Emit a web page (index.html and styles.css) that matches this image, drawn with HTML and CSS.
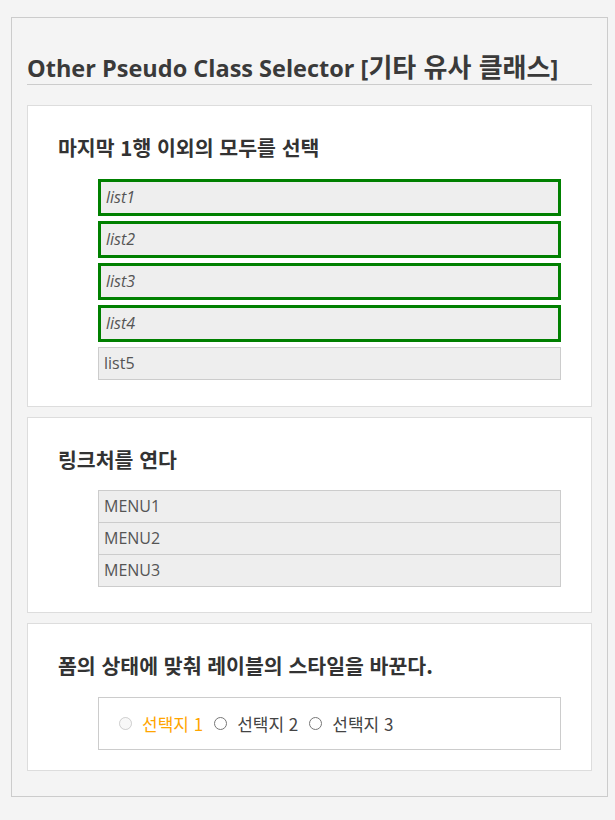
FILE: index.html
```html
<!DOCTYPE html>
<html lang="ko">
<head>
<meta charset="utf-8">
<title>Other Pseudo Class Selector</title>
<link rel="stylesheet" href="styles.css">
</head>
<body>
<div class="wrap">
  <h2 class="title">Other Pseudo Class Selector [<span class="ko">기타 유사 클래스</span>]</h2>

  <section class="card">
    <h3 class="card-title">마지막 1행 이외의 모두를 선택</h3>
    <ul class="list">
      <li>list1</li>
      <li>list2</li>
      <li>list3</li>
      <li>list4</li>
      <li>list5</li>
    </ul>
  </section>

  <section class="card">
    <h3 class="card-title card-title--tight">링크처를 연다</h3>
    <ul class="menu">
      <li><a href="#">MENU1</a></li>
      <li><a href="#">MENU2</a></li>
      <li><a href="#">MENU3</a></li>
    </ul>
  </section>

  <section class="card card--last">
    <h3 class="card-title">폼의 상태에 맞춰 레이블의 스타일을 바꾼다.</h3>
    <div class="choices">
      <input type="radio" id="c1" name="c" disabled><label for="c1">선택지 1</label>
      <input type="radio" id="c2" name="c"><label for="c2">선택지 2</label>
      <input type="radio" id="c3" name="c"><label for="c3">선택지 3</label>
    </div>
  </section>
</div>
</body>
</html>
```
FILE: styles.css
```css
* { box-sizing: border-box; }

html, body {
  margin: 0;
  padding: 0;
  background: #f4f4f4;
}

body {
  font-family: "Open Sans", "Noto Sans CJK KR", sans-serif;
  color: #555;
  font-size: 16px;
}

.wrap {
  margin: 17px 0 0 11px;
  width: 597px;
  border: 1px solid #cccccc;
  background: #f4f4f4;
  padding: 35px 15px 15px;
}

.title {
  margin: 0 0 20px;
  padding: 0 0 1px;
  height: 32px;
  font-size: 23.5px;
  line-height: 30px;
  font-weight: bold;
  color: #3a3a3a;
  border-bottom: 1px solid #cccccc;
  white-space: nowrap;
}

.title .ko {
  font-family: "Noto Sans CJK KR", sans-serif;
  font-size: 26px;
  line-height: 20px;
}

.card {
  background: #fff;
  border: 1px solid #dddddd;
  padding: 30px 30px 20px;
  margin-bottom: 10px;
}

.card-title {
  margin: 0 0 21px;
  font-family: "Noto Sans CJK KR", sans-serif;
  font-size: 20.5px;
  line-height: 22px;
  font-weight: bold;
  color: #333;
}

.card-title--tight { margin-bottom: 20px; }

.list, .menu {
  list-style: none;
  margin: 0 0 6px 40px;
  padding: 0;
}

.list li {
  background: #eeeeee;
  border: 1px solid #cccccc;
  padding: 5px;
  line-height: 21px;
  margin-bottom: 5px;
}

.list li:not(:last-child) {
  border: 3px solid green;
  font-style: italic;
}

.menu { margin-bottom: 5px; }

.menu li {
  background: #eeeeee;
  border: 1px solid #cccccc;
  margin-top: -1px;
  line-height: 31px;
  padding: 0 5px;
}

.menu li:first-child { margin-top: 0; }

.menu a {
  color: #555;
  text-decoration: none;
}

.choices {
  margin-left: 40px;
  border: 1px solid #cccccc;
  height: 53px;
  padding: 0 0 0 20px;
  display: flex;
  align-items: center;
}

.choices input {
  margin: 0 10px 0 0;
  width: 13px;
  height: 13px;
}

.choices label {
  margin-right: 11px;
  color: #444;
  font-family: "Noto Sans CJK KR", sans-serif;
  font-size: 17px;
  line-height: 22px;
}

.choices input:disabled + label {
  color: orange;
}
```
